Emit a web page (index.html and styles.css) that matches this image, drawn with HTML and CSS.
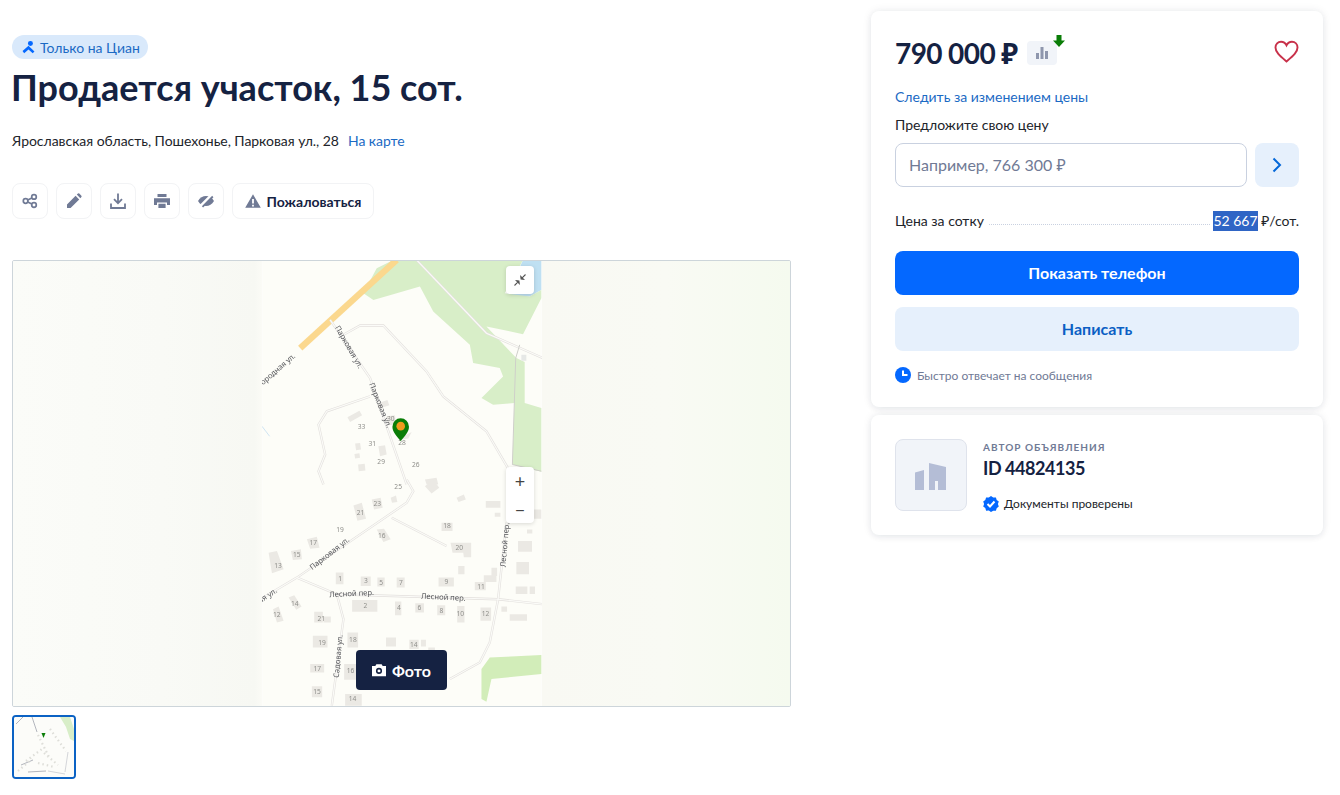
FILE: index.html
```html
<!DOCTYPE html>
<html lang="ru">
<head>
<meta charset="utf-8">
<title>Продается участок, 15 сот.</title>
<link rel="stylesheet" href="styles.css">
</head>
<body>
<div class="page">
  <main class="main">
    <div class="badge">
      <svg class="badge-icon" viewBox="0 0 12 12"><circle cx="7.800" cy="2.400" r="2.300" fill="#0468ff"/><path d="M.5 9.300 6 4.400l5.500 5.400-1.600 1.500L6 7.800l-4 3.500z" fill="#0468ff"/></svg>
      <span>Только на Циан</span>
    </div>
    <h1 class="title">Продается участок, 15 сот.</h1>
    <div class="address"><span>Ярославская область, Пошехонье, Парковая ул., 28</span><a class="map-link">На карте</a></div>
    <div class="actions">
      <div class="act">
        <svg viewBox="0 0 16 16" class="ic"><g fill="none" stroke="#707a95" stroke-width="1.7"><circle cx="3.600" cy="8" r="2.300"/><circle cx="12" cy="3.900" r="2.300"/><circle cx="12" cy="12" r="2.300"/><path d="M5.700 7 9.900 5M5.700 9l4.200 2"/></g></svg>
      </div>
      <div class="act">
        <svg viewBox="0 0 16 16" class="ic"><path d="M1 15v-3.600L9.600 2.800l3.600 3.600L4.600 15zM10.800 1.600 12 .6a1 1 0 0 1 1.300 0l2.100 2.100a1 1 0 0 1 0 1.300l-1.100 1.200z" fill="#707a95"/></svg>
      </div>
      <div class="act">
        <svg viewBox="0 0 16 16" class="ic"><path d="M8 .5v9.400M4 6.200l4 4 4-4M1 10.500V15h14v-4.500" fill="none" stroke="#707a95" stroke-width="1.800"/></svg>
      </div>
      <div class="act">
        <svg viewBox="0 0 16 16" class="ic"><path d="M3.500 1h9v3h-9zM0 5.200h16V12h-3V9.500H3V12H0zM4.400 10.800h7.200V15H4.400z" fill="#707a95"/></svg>
      </div>
      <div class="act">
        <svg viewBox="0 0 16 16" class="ic"><path d="M0 8c2-3.200 4.800-5 8-5 3.200 0 6 1.800 8 5-2 3.200-4.800 5-8 5-3.200 0-6-1.800-8-5z" fill="#707a95"/><path d="M2.500 13.500 13 3" stroke="#fff" stroke-width="3.200"/><path d="M4.500 13.800 14.800 3.500" stroke="#707a95" stroke-width="1.800"/></svg>
      </div>
      <div class="act act-wide">
        <svg viewBox="0 0 16 16" class="ic"><path d="M8 1.200 15.800 14.800H.2zM7.100 6v4.600h1.800V6zm0 5.800v1.600h1.800v-1.600z" fill="#707a95" fill-rule="evenodd"/></svg>
        <span>Пожаловаться</span>
      </div>
    </div>
    <section class="gallery">
      <div class="map-side map-left"></div>
      <div class="map-center">
        <svg class="map-svg" viewBox="0 0 280 446">
          <defs>
            <g id="roads-top">
              <path d="M470 15 680 235 850 310"/>
              <path d="M250 240 300 212H370L500 350 550 425 680 530 750 650"/>
              <path d="M330 425 200 470 175 510 195 600 175 650 190 690"/>
              <path d="M210 195 330 370 440 690"/>
            </g>
            <g id="roads-bottom">
              <path d="M440 0 460 35 440 70 110 295 0 360"/>
              <path d="M395 115 560 200"/>
              <path d="M110 295 230 345 715 360 850 375"/>
              <path d="M230 345 250 420 215 680"/>
              <path d="M740 130 715 360 690 490 660 550 570 600"/>
            </g>
          </defs>
          <rect width="280" height="446" fill="#fdfdf8"/>
          <g transform="translate(-2 -6) scale(.3333)">
            <path d="M790 15H845V105L810 125H740z" fill="#bfe0f2"/>
            <path d="M310 115 350 40 400 15H790L735 115 810 125 845 105V130L790 238 680 215 770 310 795 322V445L845 460V652L758 630 764 445 700 450 665 430 730 365 720 340 640 325 630 270 520 170 480 95 340 135z" fill="#d8eec8"/>
            <path d="M120 280 410 15" stroke="#fbd88e" stroke-width="19" fill="none"/>
            <use href="#roads-top" class="rd-out"/>
            <use href="#roads-top" class="rd-in"/>
            <path d="M780 270 768 310 758 630 845 650" fill="none" stroke="#cfcfca" stroke-width="3"/>
            <path d="M5 515 28 545" stroke="#cfe4f2" stroke-width="3"/>
            <path d="M785 300H800V318H785z" fill="#e6e8e6"/>
            <g class="bld">
              <path d="M262 488 298 468 306 482 270 502zM350 447 382 436 388 452 356 462zM285 567 300 565 303 585 288 587zM283 598 298 596 300 610 285 612zM294 630 314 628 316 648 296 650zM355 575 375 572 380 600 360 605zM380 485 405 482 408 510 384 512zM430 545 455 532 445 552 425 555zM495 675 530 670 535 690 500 690z"/>
            </g>
            <g class="lb">
              <text x="293" y="522">33</text><text x="381" y="500">30</text><text x="325" y="574">31</text><text x="352" y="628">29</text><text x="415" y="572">28</text><text x="456" y="637">26</text>
            </g>
            <g class="st">
              <text transform="translate(8 392) rotate(-41)">ородная ул.</text>
              <text transform="translate(224 218) rotate(60)">Парковая ул.</text>
              <text transform="translate(327 388) rotate(68)">Парковая ул.</text>
            </g>
          </g>
          <g transform="translate(-2 219) scale(.3333)">
            <use href="#roads-bottom" class="rd-out"/>
            <use href="#roads-bottom" class="rd-in"/>
            <path d="M845 528 690 535 665 570 665 660 680 668 695 600 845 585z" fill="#d2edb9"/>
            <g class="bld">
              <path d="M495 20 520 0 538 25 515 42zM392 55 408 48 412 68 396 70zM590 55 612 45 618 60 596 68zM678 65H722V85H678zM705 100H722V112H705zM820 90H845V118H820zM802 150H818V162H802zM775 185H817V217H775zM770 248H808V285H770zM768 322H803V344H768zM810 322H826V344H810zM280 78 305 70 318 118 292 124zM335 60 362 55 368 85 342 90zM350 150 372 148 392 180 370 188zM140 180 170 172 178 205 150 208zM92 215 122 210 125 240 98 242zM25 220 50 215 70 270 35 282zM545 130H578V155H545zM572 190H634V220H578zM610 218H634V234H612zM595 260H614V285H595zM227 280H250V315H227zM302 292H332V320H302zM352 295H374V322H352zM410 295H434V325H410zM536 295H582V322H536zM645 308H678V333H645zM672 288H710V308H672zM695 265H712V290H695zM276 362H352V398H276zM405 367H424V408H405zM466 372H492V400H466zM532 378H556V408H532zM592 380H614V430H592zM662 385H694V425H662zM725 382H742V398H725zM750 405H802V425H750zM85 355 102 348 124 382 108 392zM38 390 55 382 70 425 50 430zM162 398H188V430H162zM190 412H212V430H190zM158 470H202V505H158zM262 460H294V505H262zM378 475H408V502H378zM448 482H476V510H448zM483 482H498V502H483zM505 505H525V520H505zM150 555H192V580H150zM252 555H288V602H252zM155 622H186V655H155zM255 645H305V680H255z"/>
            </g>
            <g class="lb">
              <text x="403" y="28">25</text><text x="340" y="80">23</text><text x="290" y="107">21</text><text x="228" y="159">19</text><text x="148" y="196">17</text><text x="98" y="233">15</text><text x="42" y="265">13</text><text x="354" y="177">16</text><text x="550" y="147">18</text><text x="587" y="211">20</text>
              <text x="234" y="305">1</text><text x="312" y="310">3</text><text x="358" y="316">5</text><text x="417" y="318">7</text><text x="554" y="315">9</text><text x="652" y="329">11</text><text x="310" y="385">2</text><text x="411" y="393">4</text><text x="473" y="393">6</text><text x="539" y="401">8</text><text x="590" y="411">10</text><text x="666" y="411">12</text><text x="92" y="381">14</text><text x="38" y="412">12</text><text x="172" y="424">21</text><text x="174" y="497">19</text><text x="267" y="490">18</text><text x="450" y="503">14</text><text x="160" y="576">17</text><text x="260" y="583">16</text><text x="159" y="646">15</text><text x="266" y="665">14</text>
            </g>
            <g class="st">
              <text transform="translate(156 273) rotate(-38)">Парковая ул.</text>
              <text transform="translate(0 372) rotate(-33)">ая ул.</text>
              <text transform="translate(208 354) rotate(-3)">Лесной пер.</text>
              <text transform="translate(483 358) rotate(3)">Лесной пер.</text>
              <text transform="translate(236 597) rotate(-85)">Садовая ул.</text>
              <text transform="translate(737 264) rotate(-85)">Лесной пер.</text>
            </g>
          </g>
          <path d="M138.700 180.500c-4-5.500-8.300-9-8.300-14.500a8.300 8.300 0 0 1 16.600 0c0 5.500-4.300 9-8.300 14.500z" fill="#0a7d07"/>
          <circle cx="138.700" cy="165.500" r="4.300" fill="#f09b1e"/>
        </svg>
        <div class="collapse">
          <svg viewBox="0 0 12 12"><path d="M11.500.5 8.200 3.800M6.800 2.500l.3 2.400 2.400.3zM.5 11.500l3.300-3.300M5.200 9.500l-.3-2.400-2.400-.3z" stroke="#555" stroke-width="1.100" fill="#555"/></svg>
        </div>
        <div class="zoom"><span class="z">+</span><span class="z">−</span></div>
      </div>
      <div class="map-side map-right"></div>
      <div class="photo-btn">
        <svg viewBox="0 0 16 16"><path d="M5 1.500h6l1.200 2H16V15H0V3.500h3.800zM8 5.500a3.500 3.500 0 1 0 0 7 3.500 3.500 0 0 0 0-7z" fill="#fff" fill-rule="evenodd"/><circle cx="8" cy="9" r="1.700" fill="#fff"/></svg>
        <span>Фото</span>
      </div>
    </section>
    <div class="thumb">
      <svg viewBox="0 0 60 60">
        <rect width="60" height="60" fill="#fcfcf9"/>
        <path d="M46 0H56L60 12V24L56 22 52 10z" fill="#d8eec8"/>
        <path d="M2 7 9 0M18 0 23 15M7 48 19 43M14 55 32 54" stroke="#a9adb5" stroke-width=".9" fill="none"/>
        <path d="M34 54 51 57M54 35 51 55" stroke="#c9ccd0" stroke-width=".8" fill="none"/>
        <path d="M24 18 36 42M12 44 28 32M30 36 44 48M24 46 40 50M36 12 52 34M4 54 18 42" stroke="#deded9" stroke-width="2.200" stroke-dasharray="1.500 3" fill="none"/>
        <path d="M27.500 16h4l-2 5z" fill="#0a7d07"/>
      </svg>
    </div>
  </main>
  <aside class="side">
    <div class="card">
      <div class="price-row">
        <span class="price">790 000 ₽</span>
        <div class="chart">
          <svg viewBox="0 0 14 14"><path d="M1 7h3v6H1zM5.500 1h3v12h-3zM10 5h3v8h-3z" fill="#8e96ad"/></svg>
          <svg class="arrow" viewBox="0 0 12 12"><path d="M3.500 0h5v5.500H12L6 12 0 5.500h3.500z" fill="#0a7d07"/></svg>
        </div>
        <svg class="heart" viewBox="0 0 26 24"><path d="M13 22.500C6 16.500 1.500 12.800 1.500 7.800 1.500 4.300 4.100 1.800 7.300 1.800c2.300 0 4.500 1.300 5.700 3.700 1.200-2.400 3.400-3.700 5.700-3.700 3.200 0 5.800 2.500 5.800 6 0 5-4.500 8.700-11.500 14.700z" fill="none" stroke="#c8314a" stroke-width="2"/></svg>
      </div>
      <a class="watch">Следить за изменением цены</a>
      <div class="offer-label">Предложите свою цену</div>
      <div class="offer">
        <div class="offer-input">Например, 766 300 ₽</div>
        <div class="offer-go">
          <svg viewBox="0 0 10 16"><path d="M1.500 1.500 8 8l-6.500 6.500" fill="none" stroke="#0468d8" stroke-width="2"/></svg>
        </div>
      </div>
      <div class="rate">
        <span>Цена за сотку</span>
        <span class="dots"></span>
        <span><span class="sel">52 667</span> ₽/сот.</span>
      </div>
      <div class="btn btn-primary">Показать телефон</div>
      <div class="btn btn-light">Написать</div>
      <div class="fast">
        <svg viewBox="0 0 16 16"><circle cx="8" cy="8" r="8" fill="#0468ff"/><path d="M8 3.500V8h4.500" fill="none" stroke="#fff" stroke-width="2"/></svg>
        <span>Быстро отвечает на сообщения</span>
      </div>
    </div>
    <div class="card author">
      <div class="avatar">
        <svg viewBox="0 0 32 32"><path d="M0 13.500 9 11V31H0zM14 4l17 4v23H23V22h-3v9h-6z" fill="#b4bdd6"/></svg>
      </div>
      <div class="author-info">
        <div class="author-label">АВТОР ОБЪЯВЛЕНИЯ</div>
        <div class="author-id">ID 44824135</div>
        <div class="docs">
          <svg viewBox="0 0 16 16"><path d="M8 0l2.200 1.500 2.700-.1.800 2.500 2.100 1.700-.9 2.500.9 2.500-2.100 1.600-.8 2.600-2.700-.1L8 16l-2.200-1.400-2.700.1-.8-2.600L.2 10.500 1.100 8 .2 5.500l2.100-1.600.8-2.500 2.700.1z" fill="#0468ff"/><path d="M4.500 8l2.500 2.500 4.500-5" fill="none" stroke="#fff" stroke-width="2"/></svg>
          <span>Документы проверены</span>
        </div>
      </div>
    </div>
  </aside>
</div>
</body>
</html>
```

FILE: styles.css
```css
* { box-sizing: border-box; }
html, body { margin: 0; padding: 0; background: #fff; }
body { font-family: Lato, "Noto Sans", sans-serif; color: #121212; overflow: hidden; }
.page { display: flex; width: 1340px; height: 795px; overflow: hidden; }
.main { width: 791px; margin-left: 12px; padding-top: 35px; flex: none; }
.side { width: 452px; margin-left: 68px; padding-top: 11px; flex: none; display: flex; flex-direction: column; gap: 8px; }

.badge { display: inline-flex; align-items: center; gap: 5px; height: 24px; padding: 0 8px 0 10px; border-radius: 12px; background: #d9e9fb; color: #1b6ac4; font-size: 14px; vertical-align: top; }
.badge-icon { width: 13px; height: 13px; }
.title { margin: 6px 0 0 -1px; font-size: 36px; line-height: 44px; font-weight: 700; color: #152242; }
.address { margin-top: 22px; font-size: 14px; line-height: 20px; letter-spacing: -.04px; display: flex; gap: 9px; color: #21242a; }
.map-link { color: #1b6ac4; }

.actions { margin-top: 32px; display: flex; gap: 8px; }
.act { width: 36px; height: 36px; border: 1px solid #f2f3f5; border-radius: 8px; display: flex; align-items: center; justify-content: center; background: #fff; }
.act-wide { width: 142px; gap: 6px; font-size: 14px; font-weight: 700; color: #152242; }
.ic { width: 16px; height: 16px; }

.gallery { position: relative; margin-top: 41px; width: 779px; height: 447px; border: 1px solid #cdd5da; border-radius: 2px; display: flex; overflow: hidden; }
.map-side { width: 249px; flex: none; }
.map-left { background: linear-gradient(90deg, #fbfcf8 0%, #f9faf6 60%, #f7f8f3 97%, #fbfbf6 100%); }
.map-right { flex: 1; background: linear-gradient(90deg, #f9f9f3 0%, #f9faf4 50%, #f5faef 100%); }
.map-center { position: relative; width: 280px; flex: none; }
.map-svg { display: block; width: 280px; height: 445px; filter: blur(.35px); }
.map-svg text { font-family: "Noto Sans", sans-serif; }
.rd-out { fill: none; stroke: #e3e0dd; stroke-width: 7; }
.rd-in { fill: none; stroke: #fbfbf8; stroke-width: 3.500; }
.bld { fill: #ebe9e4; }
.lb { fill: #8f8f8b; font-size: 20px; }
.st { fill: #55565a; font-size: 23px; }

.collapse { position: absolute; left: 244px; top: 5px; width: 28px; height: 28px; border-radius: 4px; background: #fff; box-shadow: 0 1px 4px rgba(0,0,0,.15); display: flex; align-items: center; justify-content: center; }
.collapse svg { width: 12px; height: 12px; }
.zoom { position: absolute; left: 244px; top: 206px; width: 28px; height: 56px; border-radius: 4px; background: #fff; box-shadow: 0 1px 4px rgba(0,0,0,.15); display: flex; flex-direction: column; }
.z { height: 28px; display: flex; align-items: center; justify-content: center; font-size: 18px; color: #444; }

.photo-btn { position: absolute; left: 343px; top: 389px; width: 91px; height: 40px; border-radius: 4px; background: #152242; color: #fff; display: flex; align-items: center; justify-content: center; gap: 6px; font-size: 16px; font-weight: 700; }
.photo-btn svg { width: 14px; height: 14px; }

.thumb { margin-top: 8px; width: 64px; height: 64px; border: 2px solid #0b62c4; border-radius: 4px; overflow: hidden; }
.thumb svg { display: block; width: 60px; height: 60px; filter: blur(.4px); }

.card { background: #fff; border-radius: 8px; box-shadow: 0 0 10px rgba(21,34,66,.08), 0 2px 6px rgba(21,34,66,.06); padding: 24px; }
.price-row { display: flex; align-items: center; height: 36px; position: relative; }
.price { font-size: 28px; line-height: 36px; font-weight: 700; color: #152242; letter-spacing: -.6px; }
.chart { position: relative; margin-left: 10px; width: 30px; height: 24px; border-radius: 4px; background: #f1f4f9; display: flex; align-items: center; justify-content: center; }
.chart > svg:first-child { width: 14px; height: 14px; }
.arrow { position: absolute; left: 26px; top: -6px; width: 12px; height: 12px; }
.heart { position: absolute; right: 0; top: 5px; width: 25px; height: 23px; }
.watch { display: block; margin-top: 16px; font-size: 14px; line-height: 20px; color: #1b6ac4; }
.offer-label { margin-top: 8px; font-size: 14px; line-height: 20px; color: #21242a; }
.offer { margin-top: 8px; display: flex; gap: 8px; }
.offer-input { width: 352px; height: 44px; border: 1px solid #c9d1e0; border-radius: 8px; padding: 0 13px; font-size: 16px; line-height: 42px; color: #707a95; }
.offer-go { width: 44px; height: 44px; border-radius: 8px; background: #e6f0fc; display: flex; align-items: center; justify-content: center; }
.offer-go svg { width: 10px; height: 16px; }
.rate { margin-top: 24px; display: flex; align-items: center; font-size: 14px; line-height: 20px; color: #21242a; }
.dots { flex: 1; margin: 6px 3px 0 5px; border-bottom: 1px dotted #c9d1e0; }
.sel { background: #2f65c5; color: #fff; display: inline-block; }
.btn { height: 44px; padding-bottom: 2px; border-radius: 8px; display: flex; align-items: center; justify-content: center; font-size: 16px; font-weight: 700; }
.btn-primary { margin-top: 20px; background: #0468ff; color: #fff; }
.btn-light { margin-top: 12px; background: #e6f0fc; color: #0b5fc4; }
.fast { margin-top: 16px; display: flex; align-items: center; gap: 6px; height: 16px; font-size: 12px; color: #707a95; }
.fast svg { width: 16px; height: 16px; }

.author { display: flex; gap: 16px; height: 120px; }
.avatar { width: 72px; height: 72px; border: 1px solid #dfe3ec; border-radius: 8px; background: #f1f4f9; display: flex; align-items: center; justify-content: center; }
.avatar svg { width: 32px; height: 32px; }
.author-label { margin-top: 1px; font-size: 10px; line-height: 14px; letter-spacing: 1px; font-weight: 700; color: #707a95; }
.author-id { margin-top: 2px; font-size: 18px; line-height: 24px; font-weight: 700; color: #152242; letter-spacing: -.45px; }
.docs { margin-top: 16px; display: flex; align-items: center; gap: 5px; font-size: 12px; line-height: 16px; color: #21242a; }
.docs svg { width: 16px; height: 16px; }
```
